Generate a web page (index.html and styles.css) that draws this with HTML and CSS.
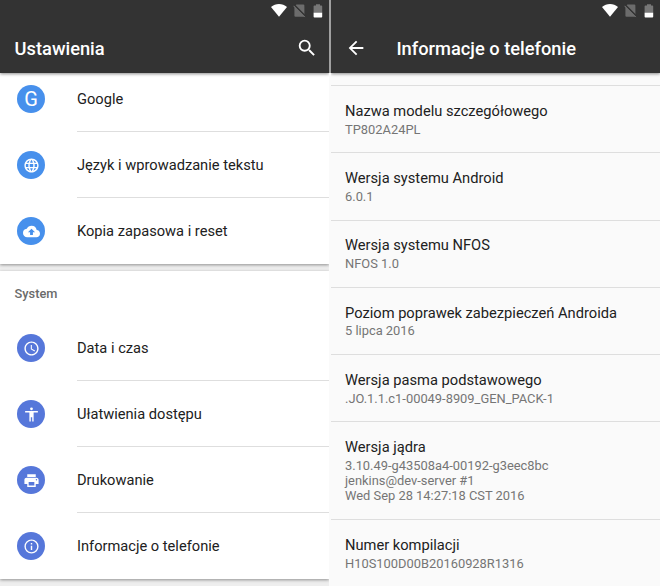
FILE: index.html
```html
<!DOCTYPE html>
<html lang="pl">
<head>
<meta charset="utf-8">
<title>Ustawienia</title>
<link rel="stylesheet" href="styles.css">
</head>
<body>
<svg class="defs" aria-hidden="true">
  <symbol id="wifi" viewBox="0 0 16 13"><path d="M8 12.8 0 2.9C2.3 1 5 0 8 0s5.700 1 8 2.900z" fill="#fff"/></symbol>
  <symbol id="sim" viewBox="0 0 14 14"><path d="M3.400 .6h6.900q1.100 0 1.100 1.100v10q0 1.100-1.100 1.100H2.500q-1.100 0-1.100-1.100V2.800z" fill="#6c6c6c"/><path d="M1 1l12 12" stroke="#333" stroke-width="2"/><path d="M.5 1.800 11.800 13.100" stroke="#7b7b7b" stroke-width="1"/></symbol>
  <symbol id="battery" viewBox="0 0 10 14"><path d="M3 .3h4v1.200h1.400q.8 0 .8.800V9H.6V2.300q0-.8.8-.8H3z" fill="#777"/><path d="M.6 8.800h8.600v4q0 .8-.8.800h-7q-.8 0-.8-.8z" fill="#fff"/></symbol>
</svg>
<main class="screens">
  <section class="screen settings">
    <header class="top">
      <div class="status">
        <svg class="wifi"><use href="#wifi"/></svg>
        <svg class="sim"><use href="#sim"/></svg>
        <svg class="battery"><use href="#battery"/></svg>
      </div>
      <div class="bar">
        <h1>Ustawienia</h1>
        <svg class="action" viewBox="0 0 24 24"><path d="M15.500 14h-.79l-.28-.27A6.470 6.470 0 0 0 16 9.500 6.500 6.500 0 1 0 9.500 16c1.610 0 3.090-.59 4.230-1.570l.27.28v.79l5 4.990L20.490 19l-4.990-5zm-6 0C7.010 14 5 11.990 5 9.500S7.010 5 9.500 5 14 7.010 14 9.500 11.990 14 9.500 14z"/></svg>
      </div>
    </header>
    <div class="card personal">
      <div class="row"><span class="icon"><b>G</b></span><span class="label">Google</span></div>
      <div class="row"><span class="icon"><svg viewBox="0 0 24 24"><path d="M11.990 2C6.470 2 2 6.480 2 12s4.470 10 9.990 10C17.520 22 22 17.520 22 12S17.520 2 11.990 2zm6.930 6h-2.950a15.650 15.650 0 0 0-1.380-3.560A8.030 8.030 0 0 1 18.920 8zM12 4.040c.83 1.200 1.480 2.530 1.910 3.960h-3.820c.43-1.430 1.080-2.760 1.910-3.960zM4.260 14C4.100 13.360 4 12.690 4 12s.1-1.360.26-2h3.380c-.08.66-.14 1.320-.14 2s.06 1.340.14 2H4.260zm.82 2h2.950c.32 1.250.78 2.450 1.380 3.560A7.990 7.990 0 0 1 5.080 16zm2.950-8H5.080a7.990 7.990 0 0 1 4.330-3.560A15.650 15.650 0 0 0 8.030 8zM12 19.960c-.83-1.200-1.480-2.530-1.910-3.960h3.820c-.43 1.430-1.080 2.760-1.910 3.960zM14.340 14H9.660c-.09-.66-.16-1.320-.16-2s.07-1.350.16-2h4.680c.09.65.16 1.320.16 2s-.07 1.340-.16 2zm.25 5.560c.6-1.110 1.060-2.310 1.380-3.560h2.950a8.030 8.030 0 0 1-4.330 3.560zM16.360 14c.08-.66.14-1.320.14-2s-.06-1.340-.14-2h3.380c.16.64.26 1.310.26 2s-.1 1.360-.26 2h-3.380z"/></svg></span><span class="label">Język i wprowadzanie tekstu</span></div>
      <div class="row"><span class="icon"><svg viewBox="0 0 24 24"><path d="M19.350 10.040A7.490 7.490 0 0 0 12 4C9.110 4 6.600 5.640 5.350 8.040A5.994 5.994 0 0 0 0 14c0 3.310 2.690 6 6 6h13c2.760 0 5-2.240 5-5 0-2.640-2.050-4.780-4.650-4.960zM14 13v4h-4v-4H7l5-5 5 5h-3z"/></svg></span><span class="label">Kopia zapasowa i reset</span></div>
    </div>
    <div class="card system">
      <h2>System</h2>
      <div class="row"><span class="icon"><svg viewBox="0 0 24 24"><path d="M11.990 2C6.470 2 2 6.480 2 12s4.470 10 9.990 10C17.520 22 22 17.520 22 12S17.520 2 11.990 2zM12 20c-4.420 0-8-3.580-8-8s3.580-8 8-8 8 3.580 8 8-3.580 8-8 8zm.5-13H11v6l5.250 3.150.75-1.230-4.500-2.670z"/></svg></span><span class="label">Data i czas</span></div>
      <div class="row"><span class="icon"><svg viewBox="0 0 24 24"><path d="M12 2a2 2 0 1 1 0 4 2 2 0 0 1 0-4zm9 7h-6v13h-2v-6h-2v6H9V9H3V7h18v2z"/></svg></span><span class="label">Ułatwienia dostępu</span></div>
      <div class="row"><span class="icon"><svg viewBox="0 0 24 24"><path d="M19 8H5c-1.660 0-3 1.340-3 3v6h4v4h12v-4h4v-6c0-1.660-1.340-3-3-3zm-3 11H8v-5h8v5zm3-7a1 1 0 1 1 0-2 1 1 0 0 1 0 2zm-1-9H6v4h12V3z"/></svg></span><span class="label">Drukowanie</span></div>
      <div class="row"><span class="icon"><svg viewBox="0 0 24 24"><path d="M11 17h2v-6h-2v6zm1-15a10 10 0 1 0 0 20 10 10 0 0 0 0-20zm0 18c-4.410 0-8-3.590-8-8s3.590-8 8-8 8 3.590 8 8-3.590 8-8 8zM11 9h2V7h-2v2z"/></svg></span><span class="label">Informacje o telefonie</span></div>
    </div>
  </section>
  <section class="screen about">
    <header class="top">
      <div class="status">
        <svg class="wifi"><use href="#wifi"/></svg>
        <svg class="sim"><use href="#sim"/></svg>
        <svg class="battery"><use href="#battery"/></svg>
      </div>
      <div class="bar">
        <svg class="back" viewBox="0 0 24 24"><path d="M20 11H7.830l5.590-5.590L12 4l-8 8 8 8 1.410-1.410L7.830 13H20v-2z"/></svg>
        <h1>Informacje o telefonie</h1>
      </div>
    </header>
    <dl class="info">
      <div><dt>Nazwa modelu szczegółowego</dt><dd>TP802A24PL</dd></div>
      <div><dt>Wersja systemu Android</dt><dd>6.0.1</dd></div>
      <div><dt>Wersja systemu NFOS</dt><dd>NFOS 1.0</dd></div>
      <div><dt>Poziom poprawek zabezpieczeń Androida</dt><dd>5 lipca 2016</dd></div>
      <div><dt>Wersja pasma podstawowego</dt><dd>.JO.1.1.c1-00049-8909_GEN_PACK-1</dd></div>
      <div><dt>Wersja jądra</dt><dd>3.10.49-g43508a4-00192-g3eec8bc<br>jenkins@dev-server #1<br>Wed Sep 28 14:27:18 CST 2016</dd></div>
      <div><dt>Numer kompilacji</dt><dd>H10S100D00B20160928R1316</dd></div>
    </dl>
  </section>
</main>
</body>
</html>
```
FILE: styles.css
```css
* { box-sizing: border-box; }
body { margin: 0; font-family: Roboto, sans-serif; color: #212121; }
.defs { display: none; }
.screens { display: grid; grid-template-columns: 329px 329px; column-gap: 2px; width: 660px; height: 586px; overflow: hidden; background: linear-gradient(#a0a0a0 73px, #fafafa 73px); }
.screen { height: 586px; overflow: hidden; }
.settings { background: #eee; }
.about { background: #fafafa; }
.top { position: relative; height: 73px; background: #333; box-shadow: 0 1px 3px rgba(0,0,0,.45); }
.status { display: flex; justify-content: flex-end; height: 23px; padding: 4px 6px 0 0; }
.wifi { width: 16px; height: 13px; margin-right: 6px; }
.sim { width: 14px; height: 14px; margin-right: 6px; }
.battery { width: 10px; height: 14px; }
.bar { display: flex; align-items: center; height: 50px; padding: 0 11px 0 14.600px; }
h1 { margin: 0; padding-top: 1px; font-size: 18.300px; font-weight: 500; line-height: 25px; color: #fff; }
.bar svg { width: 22px; height: 22px; fill: #fff; }
.action { margin-left: auto; }
.back { margin-right: 29.400px; }
.about .bar { padding-left: 14px; }
.card { background: #fff; box-shadow: 0 1px 3px rgba(0,0,0,.4); }
.personal { height: 191px; margin-bottom: 7px; }
.personal .row:first-child { height: 66px; margin-top: -7px; }
.personal { display: flow-root; }
.row { display: flex; align-items: center; height: 66px; padding-left: 17px; }
.icon { flex: none; display: grid; place-items: center; width: 28px; height: 28px; margin-right: 32px; border-radius: 50%; background: #4790ec; }
.system .icon { background: #5677da; }
.icon svg { width: 17px; height: 17px; fill: #fff; }
.icon b { color: #fff; font-size: 20px; font-weight: 400; line-height: 28px; }
.label { flex: 1; display: flex; align-items: center; height: 100%; font-size: 14.650px; border-bottom: 1px solid #dedede; }
.row:last-child .label { border-color: transparent; }
.system { height: 308px; }
h2 { height: 44px; margin: 0; padding: 0 0 0 14.600px; font-size: 12.800px; font-weight: 500; line-height: 46px; color: #6b6b6b; }
.info { margin: 0; padding-top: 12px; }
.info div { padding: 15.800px 14px 15.500px; border-top: 1px solid #dedede; }
dt { margin-bottom: 1.800px; font-size: 14.680px; line-height: 18px; }
dd { margin: 0; font-size: 12.880px; line-height: 15.200px; color: #757575; }
```
